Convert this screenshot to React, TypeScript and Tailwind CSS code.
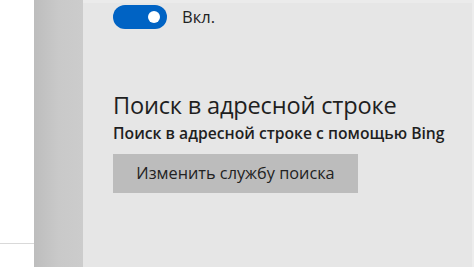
import React from 'react';

const App: React.FC = () => {
  return (
    <div
      className="flex h-[267px] w-[474px] overflow-hidden bg-white"
      style={{ fontFamily: '"Open Sans", "Noto Sans", sans-serif' }}
    >
      <div className="flex w-[34px] flex-col">
        <div className="h-[243px]" />
        <div className="h-px bg-[#d9d9d9]" />
      </div>
      <div className="w-[49px] bg-gradient-to-r from-[#bdbdbd] via-[#c9c9c9] to-[#cccccc]" />
      <div className="flex flex-1 flex-col border-t-[3px] border-[#ebebeb] bg-[#e6e6e6] pl-[30px] pt-[2px]">
        <div className="flex items-center gap-[15px]">
          <div className="flex h-[24px] w-[54px] items-center justify-end rounded-full bg-[#0063c4] pr-[7px]">
            <div className="h-[12px] w-[12px] rounded-full bg-white" />
          </div>
          <span className="text-[16.5px] leading-[24px] text-[#222]">Вкл.</span>
        </div>
        <h2 className="mt-[61px] text-[23.6px] leading-[30px] tracking-[-0.2px] text-[#1f1f1f]">
          Поиск в адресной строке
        </h2>
        <p className="mt-[2px] text-[15.7px] font-semibold leading-[22px] text-[#1f1f1f]">
          Поиск в адресной строке с помощью Bing
        </p>
        <button className="mt-[10px] flex h-[39px] w-[245px] items-center justify-center bg-[#bcbcbc] text-[16.3px] text-[#222]">
          Изменить службу поиска
        </button>
      </div>
      <div className="w-[2px] bg-[#ededed]" />
    </div>
  );
};

export default App;
